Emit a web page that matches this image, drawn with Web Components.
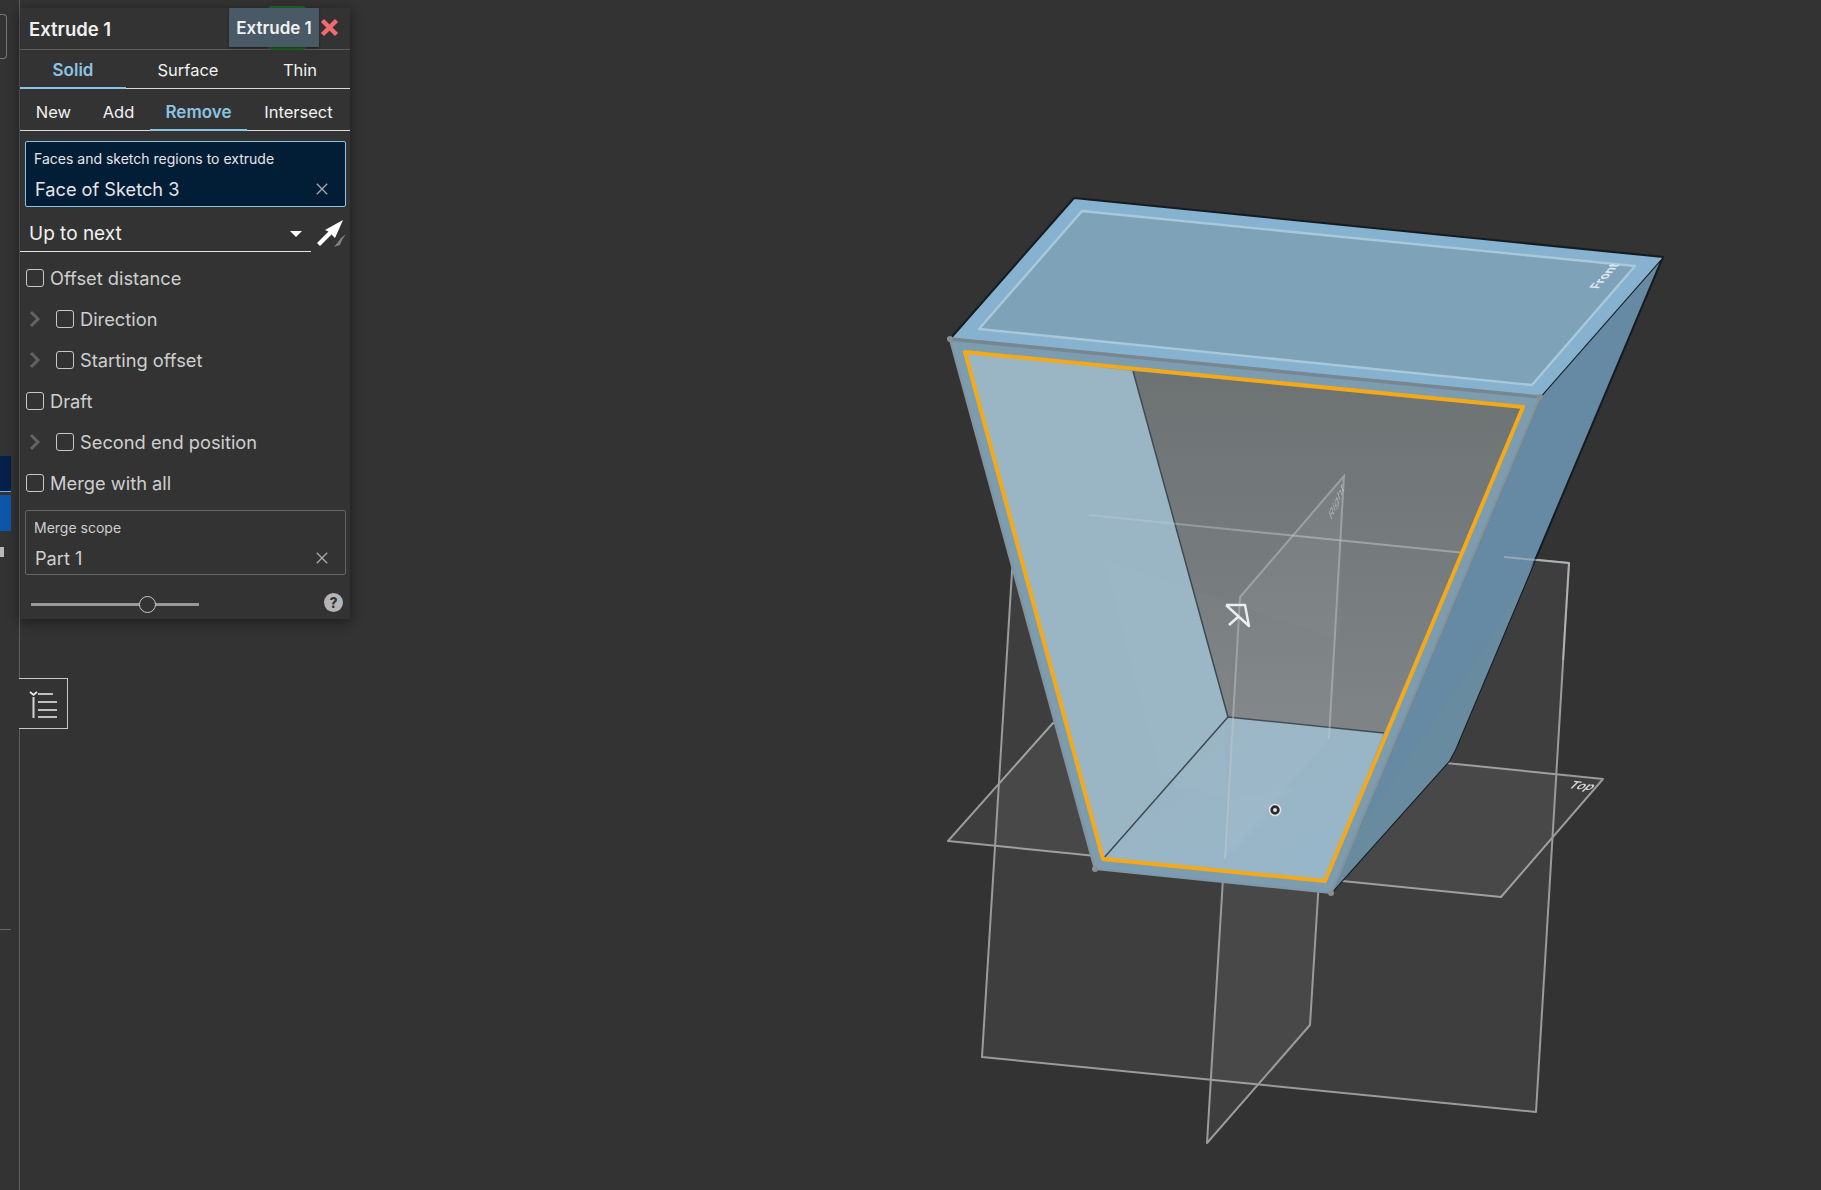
<!DOCTYPE html>
<html><head><meta charset="utf-8"><style>
html,body{margin:0;padding:0;background:#333;height:100%;overflow:hidden}
body{font-family:Inter,"Noto Sans",sans-serif}
</style></head><body>
<cad-app></cad-app>
<script>
function def(name, css, html){
  class C extends HTMLElement{
    constructor(){super();const r=this.attachShadow({mode:'open'});
      r.innerHTML='<style>'+css+'</style>'+(typeof html==='function'?html(this):html);}
  }
  customElements.define(name,C);
}
def('cad-tab',`
:host{display:flex;align-items:center;justify-content:center;box-sizing:border-box;color:#f1f1f1;font-size:16.500px;height:100%;position:relative;top:1px;padding-top:2px;border-bottom:2px solid transparent}
:host([active]){color:#8cc3e3;font-size:17px;font-weight:600;border-bottom-color:#8cc3e3}
`,'<slot></slot>');
def('cad-tabs',`
:host{display:grid;box-sizing:border-box;border-bottom:1px solid #d9d9d9}
`,'<slot></slot>');
def('cad-query',`
:host{display:flex;flex-direction:column;box-sizing:border-box;margin:0 4px 0 5px;height:65px;border:1px solid #666;border-radius:2px;padding:7px 7px 0 8px;color:#cfcfcf}
:host([focus]){background:#021d36;border-color:#8cc3e3;color:#e6e6e6;height:66px}
.l{font-size:14px;line-height:20px}
.v{display:flex;justify-content:space-between;align-items:center;font-size:18.200px;line-height:24px;margin-top:8px;padding-left:1px}
svg{display:block;margin-right:10px}
`,t=>`<div class="l">${t.getAttribute('label')}</div><div class="v"><span>${t.getAttribute('value')}</span><svg width="12" height="12" viewBox="0 0 12 12"><path d="M.8.8l10.4 10.4M11.2.8L.8 11.2" stroke="#aaa" stroke-width="1.3"/></svg></div>`);
def('cad-check',`
:host{display:flex;align-items:center;box-sizing:border-box;height:41px;color:#cfcfcf;font-size:18.300px;padding-left:6px}
:host([nested]){padding-left:9px}
.c{width:16px;height:16px;border:1px solid #c8c8c8;border-radius:3px;margin-right:6px;flex:none}
svg{margin-right:15px;flex:none}
`,t=>(t.hasAttribute('nested')?'<svg width="12" height="18" viewBox="0 0 12 18"><path d="M2 2l7 7-7 7" fill="none" stroke="#636363" stroke-width="3"/></svg>':'')+'<span class="c"></span><slot></slot>');
def('cad-panel',`
:host{display:flex;flex-direction:column;box-sizing:border-box;width:330px;height:611px;background:#333;box-shadow:0 3px 12px rgba(0,0,0,.45);position:absolute;left:20px;top:8px;color:#f1f1f1;z-index:2}
.hd{display:flex;align-items:center;height:41px;border-bottom:1px solid #5c5c5c;padding-left:9px;font-weight:600;font-size:18.500px;position:relative}
.tip{position:absolute;left:209px;top:0;height:39px;width:90px;background:#4a5966;font-weight:600;font-size:17px;display:flex;align-items:center;justify-content:center;box-shadow:0 1px 3px rgba(0,0,0,.4);border-radius:1px}
.green{position:absolute;left:247px;top:-2px;width:40px;height:44px;background:#1f5f22;border-radius:5px}
.x{position:absolute;left:300px;top:10px}
.up{display:flex;height:44px;margin-top:1px;position:relative}
.dd{flex:none;width:291px;height:44px;box-sizing:border-box;border-bottom:1px solid #e6e6e6;display:flex;align-items:center;justify-content:space-between;font-size:19px;padding:8px 9px 0}
.dd i{width:0;height:0;border:6px solid transparent;border-top:6px solid #fff;border-bottom:0}
.foot{display:flex;align-items:flex-start;justify-content:space-between;height:43px;padding:0 7px 0 11px}
.sl{width:168px;height:3px;background:#9a9a9a;position:relative;margin-top:28px}
.sl i{position:absolute;left:108px;top:-7px;width:17px;height:17px;box-sizing:border-box;border:1.500px solid #c8c8c8;border-radius:50%;background:#333}
.help{width:19px;height:19px;margin-top:18px;border-radius:50%;background:#b5b5b5;color:#333;font-size:14px;font-weight:800;display:flex;align-items:center;justify-content:center}
.checks{display:flex;flex-direction:column;margin-top:5px;padding-bottom:7px}
`,`<div class="hd"><span class="green"></span>Extrude 1<span class="tip">Extrude 1</span>
<svg class="x" width="19" height="19" viewBox="0 0 19 19"><path d="M2.500 2.500l14 14M16.500 2.500l-14 14" stroke="#f46a6e" stroke-width="4.400"/></svg></div>
<cad-tabs style="grid-template-columns:106px 124px 100px;height:39px"><cad-tab active>Solid</cad-tab><cad-tab>Surface</cad-tab><cad-tab>Thin</cad-tab></cad-tabs>
<cad-tabs style="grid-template-columns:67px 63px 97px 103px;height:42px;margin-bottom:10px;padding-top:3px"><cad-tab>New</cad-tab><cad-tab>Add</cad-tab><cad-tab active>Remove</cad-tab><cad-tab>Intersect</cad-tab></cad-tabs>
<cad-query focus label="Faces and sketch regions to extrude" value="Face of Sketch 3"></cad-query>
<div class="up"><div class="dd"><span>Up to next</span><i></i></div>
<svg width="32" height="32" viewBox="0 0 32 32" style="margin:8px 0 0 5px"><path d="M27 4L19 22 15.500 18.500 4 30 1 27 12.500 15.500 9 14z" fill="#fff"/><path d="M30 18l-5 4-3 4-4 5 6-2 2-5z" fill="#808080"/></svg></div>
<div class="checks">
<cad-check>Offset distance</cad-check>
<cad-check nested>Direction</cad-check>
<cad-check nested>Starting offset</cad-check>
<cad-check>Draft</cad-check>
<cad-check nested>Second end position</cad-check>
<cad-check>Merge with all</cad-check>
</div>
<cad-query label="Merge scope" value="Part 1"></cad-query>
<div class="foot"><div class="sl"><i></i></div><div class="help">?</div></div>`);
def('cad-viewport',`
:host{display:block;position:absolute;inset:0;z-index:0}
svg{position:absolute;left:0;top:0;filter:blur(.45px)}
text{font-family:Inter,sans-serif}
`,`<svg width="1821" height="1190" viewBox="0 0 1821 1190">
<defs>
<clipPath id="inner"><polygon points="965,352 1523,407 1325,881 1103,859"/></clipPath>
<linearGradient id="grey" x1="0" y1="0" x2="0" y2="1"><stop offset="0" stop-color="#6d7273"/><stop offset=".6" stop-color="#777c7e"/><stop offset="1" stop-color="#808486"/></linearGradient>
<linearGradient id="fl" x1="0" y1="0" x2="1" y2="1"><stop offset="0" stop-color="#9ab4c2"/><stop offset="1" stop-color="#97b6ca"/></linearGradient>
<linearGradient id="fade" gradientUnits="userSpaceOnUse" x1="1089" y1="0" x2="1300" y2="0"><stop offset="0" stop-color="#c9cdcf" stop-opacity=".28"/><stop offset="1" stop-color="#c9cdcf" stop-opacity=".48"/></linearGradient>
</defs>
<g fill="#fff" fill-opacity=".055" stroke="#9b9b9b" stroke-width="2" stroke-linejoin="round">
<polygon points="948,841 1053,723 1603,779 1501,897"/>
<polygon points="1016,507 1569,563 1536,1112 982,1057"/>
<polygon points="1344,476 1240,597 1207,1143 1310,1025"/>
</g>
<polygon points="1663,257 1540,397 1331,893 1449,761 1455,750" fill="#668aa3" stroke="#141c22" stroke-width="2" stroke-linejoin="round"/>
<polygon points="1535,560 1455,750 1449,761 1331,893 1345,850 1490,640" fill="#698ba0"/>
<polygon points="1074,198 1663,257 1540,397 950,339" fill="#87b2cf"/>
<path d="M950,339L1074,198L1663,257" fill="none" stroke="#141c22" stroke-width="2"/>
<polygon points="1082,211 1635,266 1532,385 979,329" fill="#7ea3b8" stroke="#a9c9db" stroke-width="2.400" stroke-linejoin="round"/>
<polygon points="950,339 1540,397 1331,893 1095,869" fill="#7c9cb0"/>
<path d="M950,339L1540,397" stroke="#77868f" stroke-width="3.500" fill="none"/>
<path d="M950,339L1095,869M1540,397L1331,893" stroke="#85949c" stroke-width="2.500" fill="none"/>
<path d="M1095,869L1331,893" stroke="#7f97a6" stroke-width="2" fill="none"/>
<circle cx="950" cy="339" r="3" fill="#8a8f92"/><circle cx="1540" cy="397" r="3" fill="#8a8f92"/><circle cx="1095" cy="869" r="3" fill="#8a8f92"/><circle cx="1331" cy="893" r="3" fill="#8a8f92"/>
<polygon points="965,352 1133,371 1228,717 1103,859" fill="#9ab6c5"/>
<polygon points="1133,371 1523,407 1384,733 1228,717" fill="url(#grey)"/>
<polygon points="1228,717 1384,733 1325,881 1103,859" fill="url(#fl)"/>
<polygon points="1104,560 1162,781 1230,801 1298,785 1230,857 1225,735 1240,597 1344,476 1340,640" fill="#fff" fill-opacity=".018"/>
<path d="M1133,371L1228,717L1384,733M1228,717L1103,859" stroke="#3f4a50" stroke-width="1.500" fill="none"/>
<g clip-path="url(#inner)" fill="none" stroke-width="2">
<polygon points="1344,476 1240,597 1225,857 1329,739" fill="#fff" fill-opacity=".035" stroke="none"/>
<path d="M1329,739L1344,476L1240,597L1225,859" stroke="#c9cdcf" stroke-opacity=".45"/>
<path d="M1089,515L1465,553" stroke="url(#fade)"/>
</g>
<path d="M1504,557L1569,563L1563,660" stroke="#c8d0d5" stroke-opacity=".45" stroke-width="2" fill="none"/>
<polygon points="965,352 1523,407 1325,881 1103,859" fill="none" stroke="#f4a918" stroke-width="4" stroke-linejoin="round"/>
<circle cx="1275" cy="810" r="5.500" fill="#2c2c2c" stroke="#e4e4e4" stroke-width="1.600"/><circle cx="1275" cy="810" r="2" fill="#e4e4e4"/>
<path d="M1226,605h19l4,21L1226,605M1238,617l-9,8" fill="none" stroke="#eceef0" stroke-width="2.400" stroke-linejoin="round"/>
<text transform="matrix(.66 -.75 .995 .1 1598 289)" font-size="13" font-weight="700" fill="#dfe8ee">Front</text>
<text transform="matrix(.5 -1.200 .3 .95 1331 521)" font-size="11" fill="#c8cdd0" fill-opacity=".65">Right</text>
<text transform="matrix(1.200 .12 -.9 .9 1567 788)" font-size="11" font-weight="600" fill="#d8d8d8">Top</text>
</svg>`);
def('cad-sidestrip',`
:host{display:block;position:absolute;left:0;top:0;width:20px;height:1190px;border-right:1px solid #5e5e5e;box-sizing:border-box;z-index:1;background:#333}
.b{position:absolute;left:0}
`,`<div class="b" style="top:14px;width:6px;height:43px;border:1px solid #777;border-left:0;border-radius:0 4px 4px 0"></div>
<div class="b" style="top:456px;width:11px;height:36px;background:#05214a;border-bottom:1px solid #7ab0d8;box-sizing:border-box"></div>
<div class="b" style="top:495px;width:11px;height:36px;background:#0e56ab"></div>
<div class="b" style="top:547px;width:4px;height:10px;background:#b8b8b8"></div>
<div class="b" style="top:929px;width:11px;height:1px;background:#666"></div>`);
def('cad-listbtn',`
:host{display:flex;align-items:center;justify-content:center;position:absolute;left:19px;top:678px;width:49px;height:51px;box-sizing:border-box;border:1px solid #c8c8c8;border-left:0;background:#333;z-index:2}
`,`<svg width="28" height="28" viewBox="0 0 28 28"><path d="M1 2l3.500 3L8 2" fill="none" stroke="#eee" stroke-width="1.700"/><path d="M4.500 7v21" stroke="#d4d4d4" stroke-width="2"/><path d="M9 4h15M9 12h20M9 20h20M9 27h20" stroke="#eee" stroke-width="1.700"/></svg>`);
def('cad-app',`:host{display:block;position:relative;width:1821px;height:1190px;background:#333;overflow:hidden}`,
`<cad-viewport></cad-viewport><cad-sidestrip></cad-sidestrip><cad-panel></cad-panel><cad-listbtn></cad-listbtn>`);
</script>
</body></html>
